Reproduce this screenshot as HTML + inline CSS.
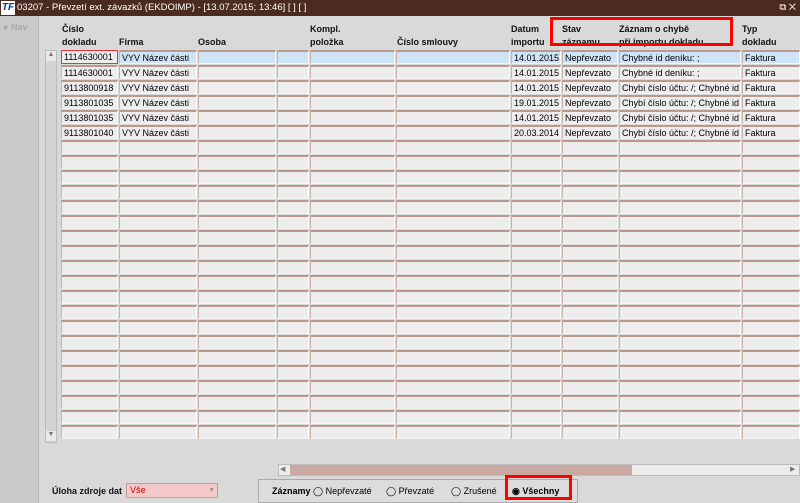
<!DOCTYPE html>
<html><head><meta charset="utf-8"><style>
*{margin:0;padding:0;box-sizing:border-box}
body{width:800px;height:503px;overflow:hidden;background:#d9d9d9;font-family:"Liberation Sans",sans-serif;font-size:9px;color:#000;position:relative}
.a{position:absolute}
.title{left:0;top:0;width:800px;height:16px;background:#4b2a1f;color:#fff;font-size:9.5px;line-height:16px}
.left{left:0;top:16px;width:39px;height:487px;background:#c9c9c9;border-right:1px solid #b8b8b8}
.h{font-weight:bold;font-size:9px;line-height:13px;color:#111}
.c{position:absolute;height:14px;background:#ededed;border-top:2px solid #b99a8f;border-left:1px solid #c9b3ab;border-right:1px solid #fff;border-bottom:1px solid #f5f5f5;line-height:12px;padding-left:2px;white-space:nowrap;overflow:hidden;font-size:9px}
.sel{background:#cfe4f6}
</style></head><body>
<div class="a title"><span style="display:inline-block;width:14px;height:14px;background:#fff;color:#0033aa;font-weight:bold;font-style:italic;font-size:10px;line-height:14px;margin:1px 2px 0 1px;text-align:center;vertical-align:top">TF</span>03207 - Převzetí ext. závazků (EKDOIMP) - [13.07.2015; 13:46] [ ] [ ]<span style="position:absolute;right:4px;top:0">⧉ ✕</span></div>
<div class="a left"></div>
<div class="a" style="left:3px;top:22px;color:#aaa;font-size:9px;font-weight:bold">● Nav</div>
<div class="a h" style="left:62px;top:23px">Číslo<br>dokladu</div>
<div class="a h" style="left:119px;top:36px">Firma</div>
<div class="a h" style="left:198px;top:36px">Osoba</div>
<div class="a h" style="left:310px;top:23px">Kompl.<br>položka</div>
<div class="a h" style="left:397px;top:36px">Číslo smlouvy</div>
<div class="a h" style="left:511px;top:23px">Datum<br>importu</div>
<div class="a h" style="left:562px;top:23px">Stav<br>záznamu</div>
<div class="a h" style="left:619px;top:23px">Záznam o chybě<br>při importu dokladu</div>
<div class="a h" style="left:742px;top:23px">Typ<br>dokladu</div>
<div class="a" style="left:550px;top:17px;width:183px;height:29px;border:3px solid #f00"></div>
<div class="a" style="left:45px;top:50px;width:12px;height:393px;background:#d4d4d4;border:1px solid #bbb"></div>
<div class="a" style="left:46px;top:51px;width:10px;height:10px;background:#e8e8e8;font-size:7px;text-align:center;color:#777">▲</div>
<div class="a" style="left:46px;top:431px;width:10px;height:10px;background:#e8e8e8;font-size:7px;text-align:center;color:#777">▼</div>
<div id="g"></div>
<div class="a" style="left:278px;top:464px;width:522px;height:12px;background:#ececec;border:1px solid #bbb"></div>
<div class="a" style="left:290px;top:465px;width:342px;height:10px;background:#c9a9a2"></div>
<div class="a" style="left:280px;top:465px;width:8px;height:10px;font-size:7px;color:#777">◀</div>
<div class="a" style="left:790px;top:465px;width:8px;height:10px;font-size:7px;color:#777">▶</div>
<div class="a h" style="left:52px;top:485px">Úloha zdroje dat</div>
<div class="a" style="left:126px;top:483px;width:92px;height:15px;background:#f5c9c9;border:1px solid #c99;color:#c00;font-size:9px;padding-left:3px;line-height:13px">Vše<span style="position:absolute;right:2px;color:#999;font-size:7px">▼</span></div>
<div class="a" style="left:258px;top:479px;width:320px;height:24px;border:1px solid #aaa;background:#dcdcdc"></div>
<div class="a" style="left:272px;top:486px;font-size:9px"><b>Záznamy</b> ◯ Nepřevzaté</div>
<div class="a" style="left:386px;top:486px;font-size:9px">◯ Převzaté</div>
<div class="a" style="left:451px;top:486px;font-size:9px">◯ Zrušené</div>
<div class="a" style="left:505px;top:475px;width:67px;height:25px;border:3px solid #f00"></div>
<div class="a" style="left:512px;top:486px;font-size:9px;font-weight:bold">◉ Všechny</div>
<script>
var cols=[[61,57],[119,78],[198,78],[277,32],[310,85],[396,114],[511,50],[562,56],[619,122],[742,58]];
var data=[
["1114630001","VYV Název části","","","","","14.01.2015","Nepřevzato","Chybné id deníku: ;","Faktura"],
["1114630001","VYV Název části","","","","","14.01.2015","Nepřevzato","Chybné id deníku: ;","Faktura"],
["9113800918","VYV Název části","","","","","14.01.2015","Nepřevzato","Chybí číslo účtu: /; Chybné id d","Faktura"],
["9113801035","VYV Název části","","","","","19.01.2015","Nepřevzato","Chybí číslo účtu: /; Chybné id d","Faktura"],
["9113801035","VYV Název části","","","","","14.01.2015","Nepřevzato","Chybí číslo účtu: /; Chybné id d","Faktura"],
["9113801040","VYV Název části","","","","","20.03.2014","Nepřevzato","Chybí číslo účtu: /; Chybné id d","Faktura"]];
var h="";
for(var r=0;r<26;r++){for(var c=0;c<10;c++){var t=(data[r]||[])[c]||"";var cl="c"+(r==0&&c>0?" sel":"");var st="left:"+cols[c][0]+"px;top:"+(50+r*15)+"px;width:"+cols[c][1]+"px;";if(r==0&&c==0)st+="border:1px solid #e33;";h+='<div class="'+cl+'" style="'+st+'">'+t+'</div>';}}
document.getElementById("g").innerHTML=h;
</script>
</body></html>
